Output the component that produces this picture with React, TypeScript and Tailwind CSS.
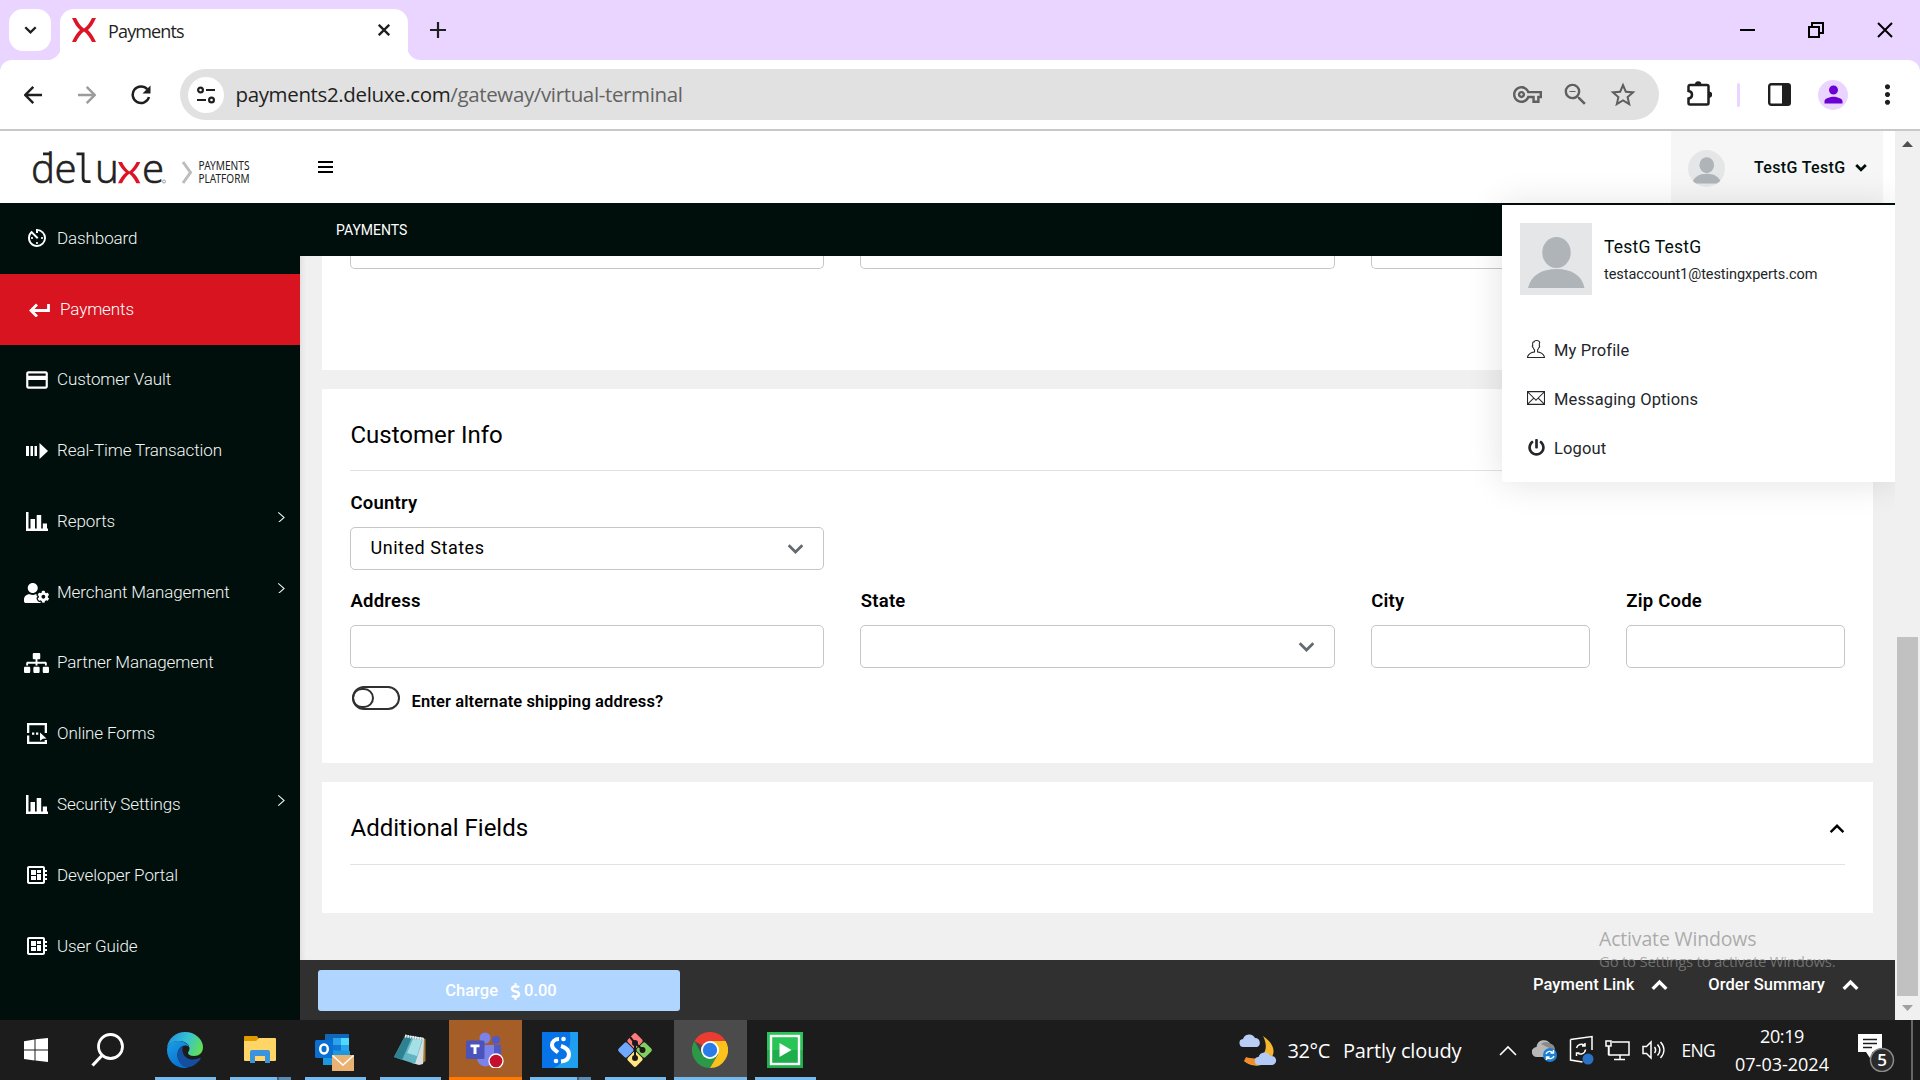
import React from "react";
import {
  MdAvTimer,
  MdCreditCard,
  MdDeveloperBoard,
  MdMoreVert,
  MdOutlineVpnKey,
  MdPerson,
  MdStarBorder,
  MdZoomOut,
} from "react-icons/md";
import { FaDollarSign, FaPowerOff, FaSitemap, FaUserCog } from "react-icons/fa";
import { TfiEmail, TfiUser } from "react-icons/tfi";

type P = { className?: string };

/* ---------- Shared glyphs ---------- */

function Chevron({ className = "", dir = "down", w = 3 }: P & { dir?: "down" | "up" | "right"; w?: number }) {
  const d = { down: "M2 5l8 8 8-8", up: "M2 14l8-8 8 8", right: "M5 2l9 8-9 8" }[dir];
  return (
    <svg viewBox="0 0 20 18" className={className} fill="none" stroke="currentColor" strokeWidth={w}>
      <path d={d} />
    </svg>
  );
}

function Avatar({ className = "" }: P) {
  return (
    <svg viewBox="0 0 72 72" className={className}>
      <rect width="72" height="72" fill="#e4e6e8" />
      <ellipse cx="36.500" cy="29.500" rx="14.200" ry="15.500" fill="#aeb4b8" />
      <path d="M8 65C11 52 22 46 36.500 46S62 52 64.500 65z" fill="#aeb4b8" />
    </svg>
  );
}

/* ---------- Browser chrome ---------- */

function TabStrip() {
  return (
    <div className="flex h-[60px] shrink-0 items-end bg-[#e9d5ff]">
      <div className="mb-[9px] ml-[9px] flex h-[42px] w-[42px] items-center justify-center rounded-[14px] bg-white">
        <Chevron className="w-[13px] text-[#1f1f1f]" w={3.6} />
      </div>
      <svg className="-mr-px ml-0 h-[14px] w-[10px]" viewBox="0 0 10 14">
        <path d="M10 0v14H-4C4 14 10 8 10 0z" fill="#fff" />
      </svg>
      <div className="flex h-[51px] w-[348px] items-center rounded-t-[14px] bg-white pb-[9px] pl-[12px] pr-[18px]">
        <svg className="h-[24px] w-[24px]" viewBox="0 0 24 24" fill="#dc1426">
          <path d="M0 0h4c2.500 5 5 8.500 8 10.500 3-2 5.500-5.500 8-10.500h4c-2.500 5.500-5 9.500-8 12 3 2.500 5.500 6.500 8 12h-4c-2.500-5-5-8.500-8-10.500-3 2-5.500 5.500-8 10.500H0c2.500-5.500 5-9.500 8-12C5 9.500 2.500 5.500 0 0z" />
        </svg>
        <span className="ml-[12px] mt-[3px] font-['Open_Sans'] text-[18px] tracking-[-0.85px] text-[#1f1f1f]">Payments</span>
        <svg className="ml-auto h-[12px] w-[12px]" viewBox="0 0 12 12" stroke="#1f1f1f" strokeWidth="2.300">
          <path d="M0.800 0.800l10.400 10.400M11.200 0.800L0.800 11.200" />
        </svg>
      </div>
      <svg className="-ml-px h-[14px] w-[14px]" viewBox="0 0 14 14">
        <path d="M0 0v14h14C6 14 0 8 0 0z" fill="#fff" />
      </svg>
      <svg className="mb-[22px] ml-[9px] h-[16px] w-[16px]" viewBox="0 0 16 16" stroke="#1f1f1f" strokeWidth="2.200">
        <path d="M8 0v16M0 8h16" />
      </svg>
      <div className="mb-[22px] ml-auto mr-[27px] flex items-center gap-[53px]">
        <svg className="h-[16px] w-[16px]" viewBox="0 0 16 16">
          <path d="M1 7h15v2H1z" />
        </svg>
        <svg className="h-[16px] w-[16px]" viewBox="0 0 16 16" fill="none" stroke="#000" strokeWidth="2">
          <path d="M1 5h10v10H1zM4 5V1h11v10h-4" />
        </svg>
        <svg className="h-[16px] w-[16px]" viewBox="0 0 16 16" fill="none" stroke="#000" strokeWidth="2">
          <path d="M1 1l14 14M15 1L1 15" />
        </svg>
      </div>
    </div>
  );
}

function Arrow({ className = "", flip }: P & { flip?: boolean }) {
  return (
    <svg viewBox="0 0 18 18" className={className} fill="none" stroke="currentColor" strokeWidth="2.400">
      <path d={flip ? "M0 9h16M8.700 0.900L16.700 9l-8 8.100" : "M18 9H2M9.300 0.900L1.300 9l8 8.100"} />
    </svg>
  );
}

function ReloadIcon({ className = "" }: P) {
  return (
    <svg viewBox="0 0 20 20" className={className}>
      <path d="M16.300 4.300A8.300 8.300 0 1018 12" fill="none" stroke="currentColor" strokeWidth="2.500" />
      <path d="M19.500 0.500v8h-8z" fill="currentColor" />
    </svg>
  );
}

function PuzzleIcon({ className = "" }: P) {
  return (
    <svg viewBox="0 0 25 25" className={className}>
      <path
        d="M3 4h17a1.500 1.500 0 011.500 1.500V22a1.500 1.500 0 01-1.500 1.500H3A1.500 1.500 0 011.500 22v-4.500C4.500 17 5 15 5 13.700S4.500 10.500 1.500 10V5.500A1.500 1.500 0 013 4z"
        fill="none"
        stroke="currentColor"
        strokeWidth="2.500"
      />
      <path d="M8 3.500a3.200 3.200 0 016.400 0zM22 10.500a3.200 3.200 0 010 6.400z" fill="currentColor" />
    </svg>
  );
}

function Toolbar() {
  return (
    <div className="shrink-0 bg-[#e9d5ff]">
      <div className="flex h-[71px] items-center rounded-t-[12px] border-b-2 border-[#c8c8c8] bg-white text-[#1f1f1f]">
        <Arrow className="ml-[24px] h-[18px] w-[18px]" />
        <Arrow className="ml-[36px] h-[18px] w-[18px] text-[#9c9c9c]" flip />
        <ReloadIcon className="ml-[35px] h-[20px] w-[20px]" />
        <div className="ml-[29px] flex h-[51px] w-[1479px] items-center rounded-full bg-[#e1e1e1] pl-[8px] pr-[21px]">
          <div className="flex h-[36px] w-[36px] items-center justify-center rounded-full bg-white">
            <svg className="h-[18px] w-[18px]" viewBox="0 0 18 18" fill="none" stroke="#1f1f1f" strokeWidth="2.200">
              <circle cx="3.500" cy="4" r="2.400" />
              <path d="M9 4h9M0 14h9" />
              <circle cx="14.500" cy="14" r="2.400" />
            </svg>
          </div>
          <span className="ml-[11.5px] font-['Open_Sans'] text-[20.5px] tracking-[-0.36px] text-[#1f1f1f]">
            payments2.deluxe.com<span className="text-[#636363]">/gateway/virtual-terminal</span>
          </span>
          <div className="ml-auto flex items-center text-[#5f5f5f]">
            <MdOutlineVpnKey className="h-[29px] w-[29px]" />
            <MdZoomOut className="ml-[19px] h-[29px] w-[29px]" />
            <MdStarBorder className="ml-[18px] h-[30px] w-[30px]" />
          </div>
        </div>
        <PuzzleIcon className="mb-[2px] ml-[28px] h-[25px] w-[25px]" />
        <div className="ml-[25px] h-[24px] w-[3px] rounded-full bg-[#e9d5ff]" />
        <svg className="ml-[28px] h-[23px] w-[23px]" viewBox="0 0 23 23">
          <rect x="1.200" y="1.200" width="20.600" height="20.600" rx="2" fill="none" stroke="#1f1f1f" strokeWidth="2.400" />
          <path d="M14 1h8v21h-8z" fill="#1f1f1f" />
        </svg>
        <div className="ml-[27px] flex h-[30px] w-[30px] items-center justify-center rounded-full bg-[#e9d5ff]">
          <MdPerson className="h-[27px] w-[27px] text-[#6a00d4]" />
        </div>
        <MdMoreVert className="ml-[23.5px] h-[31px] w-[31px]" />
      </div>
    </div>
  );
}

/* ---------- Site header ---------- */

function Logo() {
  return (
    <svg className="ml-[30px] h-[72px] w-[225px] overflow-visible" viewBox="30 131 225 72">
      <g fontFamily="'Noto Sans'" fontWeight="300" fontSize="40" fill="#222" stroke="#222" strokeWidth="0.500">
        <text y="183" x="31 54.500">de</text>
        <text y="183" x="95 142">ue</text>
      </g>
      <g fill="none" stroke="#222" strokeWidth="2.800">
        <path d="M43 153.800h7M76.500 153.800h6.600v24.200q0 3.600 3.500 3.600h4" />
      </g>
      <g fill="#dc1426">
        <path d="M118 162h4c2 4 4.500 7.500 7.300 9.500 2.800-2 5.200-5.500 7.300-9.500h3.700c-2 4.500-4.500 8-7.500 10.500 3 2.500 5.500 6 7.500 10.800h-4c-2-4.300-4.300-7.600-7-9.600-2.800 2-5.200 5.300-7.300 9.600h-4c2-4.800 4.800-8.300 7.800-10.800-3-2.500-5.800-6-7.800-10.500z" />
      </g>
      <circle cx="164" cy="181.500" r="1.500" fill="none" stroke="#777" strokeWidth="0.700" />
      <path d="M183 162l7.500 10.500L183 183" fill="none" stroke="#bdbdbd" strokeWidth="3" />
      <g fontFamily="'Noto Sans'" fontSize="12" fill="#222">
        <text x="198.500" y="170" textLength="51" lengthAdjust="spacingAndGlyphs">PAYMENTS</text>
        <text x="198.500" y="183" textLength="51" lengthAdjust="spacingAndGlyphs">PLATFORM</text>
      </g>
    </svg>
  );
}

function SiteHeader() {
  return (
    <header className="flex h-[72px] shrink-0 items-center bg-white">
      <Logo />
      <div className="mb-[1px] ml-[63px] flex w-[15px] flex-col gap-[3px]">
        <div className="h-[2px] bg-black" />
        <div className="h-[2px] bg-black" />
        <div className="h-[2px] bg-black" />
      </div>
      <div className="ml-auto mr-[12px] flex h-full w-[212px] items-center bg-[#f6f6f6] pl-[17px]">
        <Avatar className="mt-[2px] h-[37px] w-[37px] rounded-full" />
        <span className="ml-[29px] mt-[1px] text-[16px] font-medium tracking-[0.35px] text-[#000f0c]">TestG TestG</span>
        <Chevron className="ml-[9px] w-[12px] text-[#000f0c]" w={4.5} />
      </div>
    </header>
  );
}

/* ---------- Sidebar ---------- */

function ReturnArrow({ className = "" }: P) {
  return (
    <svg viewBox="0 0 21 14" className={className} fill="none" stroke="currentColor" strokeWidth="2.800">
      <path d="M19.500 1v6.500H2.500M8 1.500l-6 6 6 6" />
    </svg>
  );
}

function ArrowBars({ className = "" }: P) {
  return (
    <svg viewBox="0 0 22 16" className={className} fill="currentColor">
      <path d="M0 3h3v10H0zM4.500 3h2.500v10H4.500zM8.500 3H11v10H8.500zM13.500 0L22 8l-8.500 8z" />
    </svg>
  );
}

function BarChart({ className = "" }: P) {
  return (
    <svg viewBox="0 0 22 19" className={className} fill="currentColor">
      <path d="M0 0h2.500v16.500H22V19H0zM4.500 7H9v9.500H4.500zM10.700 3h4.500v13.500h-4.500zM16.800 11.500H21v5h-4.200z" />
    </svg>
  );
}

function FormIcon({ className = "" }: P) {
  return (
    <svg viewBox="0 0 20 21" className={className} fill="currentColor">
      <path d="M0 0h20v10h-2.300V2.300H2.300V10H0zM0 12.500h2.300v6.200h15.400V17H20v4H0zM5 9.500h2.300v2.300H5zM9 9.500h2.300v2.300H9zM13 9.500l6.500 6-3.500.300-3 2z" />
    </svg>
  );
}

const NAV: { label: string; icon: React.ReactNode; active?: boolean; more?: boolean }[] = [
  { label: "Dashboard", icon: <MdAvTimer className="mb-[1px] h-[24px] w-[24px]" /> },
  { label: "Payments", icon: <ReturnArrow className="h-[14px] w-[21px]" />, active: true },
  { label: "Customer Vault", icon: <MdCreditCard className="h-[26px] w-[26px]" /> },
  { label: "Real-Time Transaction", icon: <ArrowBars className="h-[16px] w-[22px]" /> },
  { label: "Reports", icon: <BarChart className="h-[19px] w-[22px]" />, more: true },
  { label: "Merchant Management", icon: <FaUserCog className="mt-[2px] h-[24px] w-[25px]" />, more: true },
  { label: "Partner Management", icon: <FaSitemap className="h-[22px] w-[25px]" /> },
  { label: "Online Forms", icon: <FormIcon className="mb-[1px] h-[21px] w-[20px]" /> },
  { label: "Security Settings", icon: <BarChart className="h-[19px] w-[22px]" />, more: true },
  { label: "Developer Portal", icon: <MdDeveloperBoard className="mb-[1px] h-[24px] w-[24px]" /> },
  { label: "User Guide", icon: <MdDeveloperBoard className="mb-[1px] h-[24px] w-[24px]" /> },
];

function Sidebar() {
  return (
    <nav className="flex w-[300px] shrink-0 flex-col bg-[#000f0c]">
      {NAV.map((n) => (
        <div
          key={n.label}
          className={
            n.active
              ? "flex h-[70.8px] items-center bg-[#d7141f] pl-[26px] pt-[1px] text-white"
              : "flex h-[70.8px] items-center pl-[23px] text-[#f4f6f5]"
          }
        >
          <div className="flex w-[27px] shrink-0 justify-center text-white">{n.icon}</div>
          <span className="ml-[7px] text-[17px] font-light tracking-[-0.1px]">{n.label}</span>
          {n.more && <Chevron dir="right" className="mb-[10px] ml-auto mr-[12px] w-[13px]" w={1.6} />}
        </div>
      ))}
    </nav>
  );
}

/* ---------- Main form ---------- */

function Label({ children }: { children: React.ReactNode }) {
  return (
    <div className="h-[37px] pl-[0.5px] text-[18.5px] font-semibold leading-[26px] tracking-[0.22px] text-black">{children}</div>
  );
}

function Input({ value, select }: { value?: string; select?: boolean }) {
  return (
    <div className="flex h-[43px] items-center rounded-[5px] border border-[#c6c6c6] bg-white pl-[19.5px] pr-[19px]">
      <span className="mb-[2px] text-[18px] tracking-[0.53px] text-black">{value}</span>
      {select && <Chevron className="ml-auto w-[17px] text-[#636a70]" w={3.2} />}
    </div>
  );
}

function Main() {
  return (
    <main className="flex min-w-0 flex-1 flex-col bg-[#f0f0f0]">
      <div className="flex h-[53px] shrink-0 items-center bg-[#000f0c] pl-[36px] pt-[2px] text-[14px] text-white">PAYMENTS</div>

      <div className="min-h-0 flex-1 overflow-hidden pl-[22px] pr-[22px] shadow-[inset_5px_0_5px_-3px_rgba(0,0,0,0.08)]">
        <section className="h-[114px] bg-white px-[28px]">
          <div className="grid grid-cols-3 gap-9">
            <div className="h-[12.5px] rounded-b-[5px] border border-t-0 border-[#c6c6c6]" />
            <div className="h-[12.5px] rounded-b-[5px] border border-t-0 border-[#c6c6c6]" />
            <div className="h-[12.5px] rounded-b-[5px] border border-t-0 border-[#c6c6c6]" />
          </div>
        </section>

        <section className="mt-[19px] h-[374px] bg-white px-[28px] pt-[27px]">
          <h2 className="h-[55px] border-b border-[#e2e2e2] pl-[0.5px] text-[24px] leading-[38px] text-black">Customer Info</h2>
          <div className="mt-[19px] grid grid-cols-3 gap-x-9 gap-y-[18px]">
            <div>
              <Label>Country</Label>
              <Input value="United States" select />
            </div>
            <div className="col-start-1">
              <Label>Address</Label>
              <Input />
            </div>
            <div>
              <Label>State</Label>
              <Input select />
            </div>
            <div className="grid grid-cols-2 gap-9">
              <div>
                <Label>City</Label>
                <Input />
              </div>
              <div>
                <Label>Zip Code</Label>
                <Input />
              </div>
            </div>
          </div>
          <div className="mt-[19px] flex items-start pl-[2px]">
            <div className="-mt-[1px] h-[24px] w-[48px] rounded-full border-2 border-[#303030]">
              <div className="-ml-[2px] h-[20px] w-[22px] rounded-full border-2 border-[#303030]" />
            </div>
            <span className="ml-[11.5px] mt-[3px] text-[16.5px] font-semibold leading-[24px] tracking-[0.12px] text-black">
              Enter alternate shipping address?
            </span>
          </div>
        </section>

        <section className="mt-[19px] h-[131px] bg-white px-[28px] pt-[27px]">
          <div className="flex h-[56px] items-start justify-between border-b border-[#e2e2e2]">
            <h2 className="pl-[0.5px] text-[24px] leading-[38px] text-black">Additional Fields</h2>
            <Chevron dir="up" className="mt-[12px] w-[16px] text-black" w={3} />
          </div>
        </section>
      </div>

      <footer className="flex h-[60px] shrink-0 bg-[#303030] pl-[18px] pr-[36px] text-[16.5px] font-medium text-white">
        <button className="mt-[10px] flex h-[41px] w-[362px] items-center justify-center rounded-[3px] bg-[#b0d5ff] pl-[4px] pt-[1px]">
          Charge
          <FaDollarSign className="ml-[9px] h-[17px] w-[17px]" />
          0.00
        </button>
        <div className="ml-auto flex h-[50px] items-center">
          <span className="tracking-[0.1px]">Payment Link</span>
          <Chevron dir="up" className="ml-[17px] w-[17px]" w={4} />
          <span className="ml-[40px] tracking-[0.05px]">Order Summary</span>
          <Chevron dir="up" className="ml-[17px] w-[17px]" w={4} />
        </div>
      </footer>
    </main>
  );
}

function UserMenu() {
  const rows = [
    { label: "My Profile", icon: <TfiUser className="h-[18px] w-[18px]" /> },
    { label: "Messaging Options", icon: <TfiEmail className="h-[18px] w-[18px]" /> },
    { label: "Logout", icon: <FaPowerOff className="h-[17px] w-[17px]" /> },
  ];
  return (
    <div className="absolute right-0 top-[74px] h-[277px] w-[393px] rounded-bl-[3px] bg-white pl-[18px] pt-[18px] shadow-[0_0_36px_rgba(0,0,0,0.12)]">
      <div className="flex">
        <Avatar className="h-[72px] w-[72px]" />
        <div className="ml-[12px] pt-[11px]">
          <div className="text-[17.5px] leading-[26px] tracking-[0.2px] text-[#000f0c]">TestG TestG</div>
          <div className="mt-[3px] text-[14.5px] leading-[24px] tracking-[-0.06px] text-[#212529]">
            testaccount1@testingxperts.com
          </div>
        </div>
      </div>
      <div className="mt-[32px]">
        {rows.map((r) => (
          <div key={r.label} className="flex h-[49px] items-center pl-[7px] text-[#23272b]">
            <div className="mb-[5px] flex w-[18px] justify-center">{r.icon}</div>
            <span className="ml-[9px] text-[16.5px] tracking-[0.13px]">{r.label}</span>
          </div>
        ))}
      </div>
    </div>
  );
}

function Scrollbar() {
  return (
    <div className="flex w-[25px] shrink-0 flex-col items-center bg-[#f0f0f0]">
      <svg className="mt-[10px] h-[6px] w-[11px]" viewBox="0 0 11 6">
        <path d="M5.500 0L11 6H0z" fill="#505050" />
      </svg>
      <div className="mt-[490px] h-[359px] w-[21px] bg-[#c1c1c1]" />
      <svg className="mt-[9px] h-[6px] w-[11px]" viewBox="0 0 11 6">
        <path d="M0 0h11L5.500 6z" fill="#a0a0a0" />
      </svg>
    </div>
  );
}

/* ---------- Taskbar ---------- */

function EdgeIcon() {
  return (
    <svg className="h-[36px] w-[36px]" viewBox="0 0 36 36">
      <defs>
        <linearGradient id="edgeTop" x1="0" y1="0.3" x2="1" y2="0.6">
          <stop offset="0" stopColor="#2193d8" />
          <stop offset="0.5" stopColor="#35c1d8" />
          <stop offset="1" stopColor="#63e052" />
        </linearGradient>
        <linearGradient id="edgeBody" x1="0" y1="0" x2="0.6" y2="1">
          <stop offset="0" stopColor="#1aa0e6" />
          <stop offset="1" stopColor="#0a6dcf" />
        </linearGradient>
      </defs>
      <path d="M0 16C1 7 8 0 18 0c11 0 18 8 18 15 0 6-4 9-9 9-4 0-6-1.500-6-3 0-1 1.500-2 1.500-4.500C22.500 13 19 9 12 9 6 9 2 12 0 16z" fill="url(#edgeTop)" />
      <path d="M0 18c0-5 5-9 11-9 7 0 11.500 4 11.500 7.500 0-2-2-3-4-3-5 0-8 4.500-8 9.500 0 6 4.500 11 10 12.500-1 .5-2 .5-3 .5C8 36 0 28 0 18z" fill="url(#edgeBody)" />
      <path d="M10.500 23c0-4 2.500-7.500 6-9-1.500 2-1.500 4-.5 7 1.500 4 5 6.500 9.500 6.500 3 0 5.500-.8 7.500-1.700.8-.3 1 .3.700.8C31 31 26 35 20.500 35.500c-5.500-.5-10-6.500-10-12.500z" fill="#134f9e" />
    </svg>
  );
}

function FolderIcon() {
  return (
    <svg className="h-[28px] w-[32px]" viewBox="0 0 32 28">
      <path d="M0 1a1 1 0 011-1h12l2 3v5H0z" fill="#e09a00" />
      <path d="M0 5h12l3-3h16a1 1 0 011 1v21a1 1 0 01-1 1H1a1 1 0 01-1-1z" fill="#ffd566" />
      <path d="M6 27V16a2 2 0 012-2h16a2 2 0 012 2v11h-5v-7H11v7z" fill="#3a94dd" />
    </svg>
  );
}

function OutlookIcon() {
  return (
    <svg className="mt-[4px] h-[38px] w-[40px]" viewBox="0 0 40 38">
      <path d="M10 1h24v22H10z" fill="#1066b8" />
      <path d="M18 5h8v7h-8zM26 12h8v7h-8z" fill="#2aa3ea" />
      <path d="M26 5h8v7h-8z" fill="#50d9ff" />
      <path d="M18 12h8v7h-8z" fill="#0f78d4" />
      <path d="M8 17l27 1v14H8z" fill="#1b98e0" />
      <rect y="7" width="18" height="18" rx="1.500" fill="#0a6fd0" />
      <ellipse cx="9" cy="16" rx="3.800" ry="4.500" fill="none" stroke="#fff" strokeWidth="2.500" />
      <path d="M17 22h22v16H17z" fill="#e9b273" />
      <path d="M17.500 22.500L28 32l10.500-9.500" fill="none" stroke="#fff" strokeWidth="1.500" />
    </svg>
  );
}

function NotepadIcon() {
  return (
    <svg className="h-[34px] w-[34px]" viewBox="0 0 34 34">
      <path d="M29 5l3.500 1v22l-4 3z" fill="#a67c33" />
      <path d="M12 2l19 3-1 26-4 1-7-2z" fill="#d7dfe2" />
      <path d="M12 3l18 3-8 25L1 24z" fill="#63b4c2" />
      <path d="M12 3l7 1L9 27l-8-3z" fill="#2e8191" />
      <path d="M20 6l9 1-5 16-10-3z" fill="#a5dfe7" />
      <path d="M12 3l18 3" stroke="#eee" strokeWidth="2.800" strokeDasharray="1.500 1" />
    </svg>
  );
}

function TeamsIcon() {
  return (
    <svg className="h-[36px] w-[38px]" viewBox="0 0 38 36">
      <circle cx="30" cy="8" r="4" fill="#5059c9" />
      <path d="M25 13h10v12a6 6 0 01-10 4z" fill="#5059c9" />
      <circle cx="19" cy="6" r="5.500" fill="#7b83eb" />
      <path d="M11 13h17v13a8.500 8.500 0 01-17 0z" fill="#7b83eb" />
      <rect y="8.500" width="18.500" height="18.500" rx="1.500" fill="#4b53bc" />
      <path d="M4.500 12.500h9v2.700h-3V22H7.500v-6.800h-3z" fill="#fff" />
      <circle cx="30" cy="29" r="7" fill="#c50f2e" stroke="#fff" strokeWidth="1.300" />
    </svg>
  );
}

function SIcon() {
  return (
    <svg className="h-[36px] w-[36px]" viewBox="0 0 36 36">
      <rect width="36" height="36" fill="#0873e6" />
      <path d="M36 0v36H12C24 30 30 16 28 0z" fill="#1f9ff0" />
      <g fill="none" stroke="#fff" strokeWidth="4">
        <path d="M17 7c-4 0-7 2.500-7 6 0 4 3 5 6 7.500" />
        <path d="M19 14c5 1.500 8 4.500 8 8.500 0 4-3 6.500-8 7" />
      </g>
      <circle cx="21.500" cy="7" r="2.300" fill="#fff" />
      <circle cx="14" cy="29" r="2.300" fill="#fff" />
    </svg>
  );
}

function GitIcon() {
  return (
    <svg className="h-[36px] w-[36px]" viewBox="0 0 36 36">
      <g transform="rotate(45 18 18)">
        <rect x="5.500" y="5.500" width="12" height="12" rx="2" fill="#ff7b7b" />
        <rect x="18.500" y="5.500" width="12" height="12" rx="2" fill="#80d060" />
        <rect x="5.500" y="18.500" width="12" height="12" rx="2" fill="#70a8ff" />
        <rect x="18.500" y="18.500" width="12" height="12" rx="2" fill="#ffe680" />
      </g>
      <g stroke="#1a1a1a" strokeWidth="2" fill="#1a1a1a">
        <path d="M13 5l5 6v15M18 11l8 7" fill="none" />
        <circle cx="18" cy="11" r="2" />
        <circle cx="18" cy="26" r="2" />
        <circle cx="25.500" cy="18" r="2" />
      </g>
    </svg>
  );
}

function ChromeIcon() {
  return (
    <svg className="h-[36px] w-[36px]" viewBox="0 0 36 36">
      <path d="M18 18L2.400 9A18 18 0 0133.600 9z" fill="#ea3c30" />
      <path d="M2.400 9A18 18 0 0018 36l8-13.500L18 18 10 22.500z" fill="#2b9947" />
      <path d="M18 36A18 18 0 0033.600 9H18l8 13.500z" fill="#fcc21b" />
      <circle cx="18" cy="18" r="9" fill="#fff" />
      <circle cx="18" cy="18" r="7.200" fill="#2a7de9" />
    </svg>
  );
}

function PlayIcon() {
  return (
    <svg className="h-[36px] w-[36px]" viewBox="0 0 36 36">
      <rect width="36" height="36" fill="#27c556" />
      <path d="M0 18h36v18H0z" fill="#1fae4c" />
      <rect x="4" y="4" width="28" height="28" fill="none" stroke="#fff" strokeWidth="2.400" />
      <path d="M12.500 11l12 7-12 7z" fill="#fff" />
    </svg>
  );
}

const APPS: { id: string; icon: React.ReactNode; tone?: "alert" | "current"; stacked?: boolean }[] = [
  { id: "edge", icon: <EdgeIcon /> },
  { id: "files", icon: <FolderIcon />, stacked: true },
  { id: "outlook", icon: <OutlookIcon /> },
  { id: "notepad", icon: <NotepadIcon /> },
  { id: "teams", icon: <TeamsIcon />, tone: "alert" },
  { id: "sapp", icon: <SIcon />, stacked: true },
  { id: "git", icon: <GitIcon /> },
  { id: "chrome", icon: <ChromeIcon />, tone: "current" },
  { id: "play", icon: <PlayIcon /> },
];

const SLOT = {
  plain: "flex h-full w-[73px] flex-col items-center",
  alert: "flex h-full w-[73px] flex-col items-center bg-[#a55e28]",
  current: "flex h-full w-[73px] flex-col items-center bg-[#4b4b4b]",
};
const BAR = {
  plain: "flex h-[3px] w-[61px] justify-end bg-[#76b9ed]",
  alert: "flex h-[3px] w-full bg-[#ff7800]",
  current: "flex h-[3px] w-full bg-[#76b9ed]",
};

function Tray() {
  return (
    <div className="ml-auto flex h-full items-center font-['Open_Sans'] text-[18px] text-white">
      <svg className="h-[34px] w-[38px]" viewBox="0 0 38 34">
        <path d="M24 3c9 6 13 14 9 21-5 9-19 12-28 4 9 2 17-2 20-8 3-5 2-11-1-17z" fill="#f5b52e" />
        <path d="M7 24c8 3 20 1 25-4-3 10-16 16-27 8z" fill="#f08c2b" />
        <path d="M5 14a4 4 0 01-1-8 6.500 6.500 0 0112-1 4.700 4.700 0 012 9z" fill="#b9cdf5" />
        <path d="M20 32a4 4 0 01-.5-8 6.500 6.500 0 0112-1 4.500 4.500 0 012 9z" fill="#b4caf6" />
      </svg>
      <span className="ml-[10px] mt-[2px] whitespace-pre text-[20px] tracking-[-0.4px]">32°C</span>
      <span className="ml-[13px] mt-[2px] whitespace-pre text-[20px] tracking-[-0.1px]">Partly cloudy</span>
      <Chevron dir="up" className="ml-[37px] w-[20px]" w={1.6} />
      <svg className="ml-[14px] h-[26px] w-[25px]" viewBox="0 0 25 26">
        <path d="M5 20a5 5 0 01-.5-10 7.500 7.500 0 0114-3 5 5 0 012 9l-5 4z" fill="#b8b8b8" />
        <path d="M9 7a7 7 0 0110 0 5 5 0 013 6l-5-2z" fill="#8a8a8a" />
        <circle cx="18" cy="18" r="7" fill="#1c7fd6" />
        <path d="M14 17a4 4 0 017-1m1 3a4 4 0 01-7 1M21.500 13v3h-3M14.500 23v-3h3" fill="none" stroke="#fff" strokeWidth="1.400" />
      </svg>
      <svg className="ml-[12px] h-[32px] w-[26px]" viewBox="0 0 26 32" fill="none" stroke="#fff" strokeWidth="1.500">
        <path d="M1.500 5.500L23 2.500V16M1.500 5.500V26l12 2" />
        <path d="M7.500 14a5 5 0 018-2.500m1 4a5 5 0 01-8 3.500M16 9v3h-3M7.500 22v-3h3" />
        <circle cx="19" cy="25" r="5.500" fill="#2b72c4" stroke="none" />
      </svg>
      <svg className="ml-[10px] h-[24px] w-[25px]" viewBox="0 0 25 24" fill="none" stroke="#fff" strokeWidth="1.500">
        <path d="M7 4h17v13H4V9M15 17v4.500M9 21.500h11M1 3h5v5H1zM3.500 8v9" />
      </svg>
      <svg className="ml-[12px] h-[24px] w-[24px]" viewBox="0 0 24 24" fill="none" stroke="#fff" strokeWidth="1.500">
        <path d="M1 8.500h3.500L9 4v16l-4.500-4.500H1zM12.500 9c1.500 2 1.500 4 0 6M15.500 6.500c3 3.500 3 7.500 0 11M18.500 4c4.500 5 4.500 11 0 16" />
      </svg>
      <span className="ml-[15px] mt-[1px] text-[17.5px] tracking-[-0.7px]">ENG</span>
      <div className="ml-[19px] flex w-[96px] flex-col items-center text-[18px] leading-[28px]">
        <span className="tracking-[-0.4px]">20:19</span>
        <span className="whitespace-nowrap tracking-[0px]">07-03-2024</span>
      </div>
      <svg className="ml-[27px] mt-[2px] h-[42px] w-[38px]" viewBox="0 0 38 42">
        <path d="M1 2h24v18H15v9l-6-9H1z" fill="#fff" transform="translate(0 2)" />
        <path d="M6 9.500h14M6 13.500h14M6 17.500h9" stroke="#1c1c1c" strokeWidth="1.500" />
        <circle cx="25" cy="30" r="11.500" fill="#2b2b2b" stroke="#8a8a8a" strokeWidth="1.500" />
        <text x="25" y="36" textAnchor="middle" fontFamily="Open Sans" fontWeight="600" fontSize="17" fill="#fff">5</text>
      </svg>
      <div className="ml-[16px] mr-[7px] h-full w-[2px] bg-[#666]" />
    </div>
  );
}

function Taskbar() {
  return (
    <div className="flex h-[60px] shrink-0 items-center bg-[#1c1c1c]">
      <svg className="ml-[24px] h-[24px] w-[24px]" viewBox="0 0 24 24" fill="#fff">
        <path d="M0 3.200L10.500 1.500V11.500H0zM11.500 1.300L24 0v11.500H11.500zM0 12.500h10.500v10L0 21zM11.500 12.500H24V24l-12.500-1.500z" />
      </svg>
      <svg className="ml-[43px] h-[34px] w-[33px]" viewBox="0 0 33 34" fill="none" stroke="#fff" strokeWidth="2.800">
        <circle cx="19.500" cy="13.500" r="12" />
        <path d="M11 22.500L1.500 32.500" strokeWidth="3.200" />
      </svg>
      <div className="ml-[25px] flex h-full gap-[2px]">
        {APPS.map((a) => {
          const tone = a.tone ?? "plain";
          return (
            <div key={a.id} className={SLOT[tone]}>
              <div className="flex flex-1 items-center pr-[1.5px] pt-[3px]">{a.icon}</div>
              <div className={BAR[tone]}>{a.stacked && <div className="w-[14px] border-l-2 border-[#40607c] bg-[#5a8bb3]" />}</div>
            </div>
          );
        })}
      </div>
      <Tray />
    </div>
  );
}

export default function App() {
  return (
    <div className="relative flex h-[1080px] w-[1920px] flex-col overflow-hidden bg-white font-['Roboto',sans-serif]">
      <TabStrip />
      <Toolbar />
      <div className="flex min-h-0 flex-1">
        <div className="relative flex min-w-0 flex-1 flex-col overflow-hidden">
          <SiteHeader />
          <div className="flex min-h-0 flex-1">
            <Sidebar />
            <Main />
          </div>
          <UserMenu />
        </div>
        <Scrollbar />
      </div>
      <Taskbar />
      <div className="absolute left-[1599px] top-[924px] whitespace-nowrap font-['Open_Sans'] text-[#8c8c8c]/70">
        <div className="text-[19.5px] leading-[30px] tracking-[-0.17px]">Activate Windows</div>
        <div className="-mt-[1px] text-[15px] leading-[16px] tracking-[-0.27px]">Go to Settings to activate Windows.</div>
      </div>
    </div>
  );
}
